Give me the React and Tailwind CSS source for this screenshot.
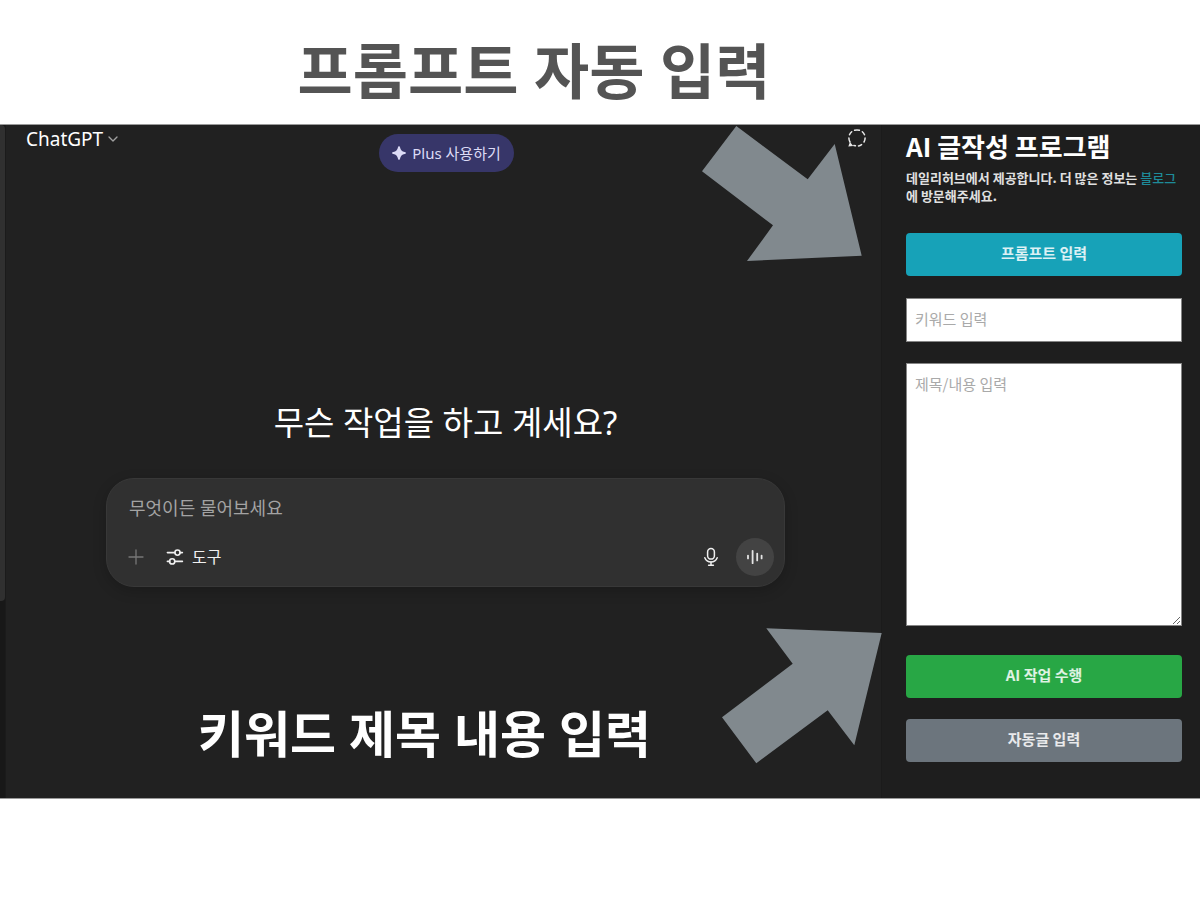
import { ChevronDown } from 'lucide-react';

const fontUi = "font-['Noto_Sans','Noto_Sans_CJK_KR',sans-serif]";
const fontKr = "font-['Noto_Sans_CJK_KR',sans-serif]";

function SparkleIcon() {
  return (
    <svg width="14" height="14" viewBox="0 0 14 14" fill="currentColor" aria-hidden="true">
      <path d="M7 0.2C7.6 0.2 7.9 0.7 8 1.3C8.5 4 10 5.5 12.7 6C13.3 6.1 13.8 6.4 13.8 7C13.8 7.6 13.3 7.9 12.7 8C10 8.5 8.5 10 8 12.7C7.9 13.3 7.6 13.8 7 13.8C6.4 13.8 6.1 13.3 6 12.7C5.5 10 4 8.5 1.3 8C0.7 7.9 0.2 7.6 0.2 7C0.2 6.4 0.7 6.1 1.3 6C4 5.5 5.5 4 6 1.3C6.1 0.7 6.4 0.2 7 0.2Z" />
    </svg>
  );
}

function TemporaryChatIcon() {
  return (
    <svg width="20" height="20" viewBox="0 0 20 20" fill="none" stroke="currentColor" strokeWidth="1.5" strokeLinecap="round" aria-hidden="true">
      <path d="M7.6 2.3A8.2 8.2 0 0 1 12.4 2.3" />
      <path d="M15.3 3.7A8.2 8.2 0 0 1 17.5 6.7" />
      <path d="M18.1 10A8.2 8.2 0 0 1 17 14" />
      <path d="M14.6 16.6A8.2 8.2 0 0 1 11.5 17.9" />
      <path d="M4.7 3.7A8.2 8.2 0 0 0 2.5 6.7" />
      <path d="M1.9 10A8.2 8.2 0 0 0 3 14" />
      <path d="M8.4 17.8L6.8 17.4" />
      <path d="M3.2 15.4L2.4 17.6L4.8 17.4Z" fill="currentColor" />
    </svg>
  );
}

function PlusIcon() {
  return (
    <svg width="16" height="16" viewBox="0 0 16 16" fill="none" stroke="currentColor" strokeWidth="1.3" strokeLinecap="round" aria-hidden="true">
      <path d="M8 1V15M1 8H15" />
    </svg>
  );
}

function ToolsIcon() {
  return (
    <svg width="18" height="18" viewBox="0 0 18 18" fill="none" stroke="currentColor" strokeWidth="1.6" strokeLinecap="round" aria-hidden="true">
      <circle cx="11.5" cy="4.6" r="2.6" />
      <circle cx="6.2" cy="13.4" r="2.6" />
      <path d="M1.4 4.6H8.9M14.1 4.6H16.4" />
      <path d="M1.4 13.4H3.6M8.8 13.4H16.4" />
    </svg>
  );
}

function MicIcon() {
  return (
    <svg width="16" height="20" viewBox="0 0 16 20" fill="none" stroke="currentColor" strokeWidth="1.5" strokeLinecap="round" aria-hidden="true">
      <rect x="4.6" y="1.5" width="6.8" height="10.6" rx="3.4" />
      <path d="M1.8 10.8C2.8 13.4 5.1 15 8 15C10.9 15 13.2 13.4 14.2 10.8" />
      <path d="M8 15V18M5.6 18.2H10.4" />
    </svg>
  );
}

function VoiceIcon() {
  return (
    <svg width="18" height="18" viewBox="0 0 18 18" fill="none" stroke="currentColor" strokeWidth="1.8" strokeLinecap="round" aria-hidden="true">
      <path d="M2 7.6V10.4M6.6 2.8V15.2M11.2 5.6V12.4M15.6 7.6V10.4" />
    </svg>
  );
}

function ChatPane() {
  return (
    <section className="relative flex min-w-0 flex-1 flex-col bg-[#212121] text-white">
      <header className="grid grid-cols-[1fr_auto_1fr] items-start pl-5 pr-[14px]">
        <button className="flex items-center gap-[2px] justify-self-start text-[19px] leading-7">
          ChatGPT
          <ChevronDown size={16} strokeWidth={2} className="text-[#a0a0a0]" />
        </button>
        <button className="mt-[9px] flex h-[38px] items-center gap-[6px] rounded-full bg-[#373669] px-[13px] text-[15px] text-[#dcdbf6]">
          <SparkleIcon />
          Plus 사용하기
        </button>
        <button aria-label="임시 채팅" className="mt-[3px] justify-self-end text-[#e8e8e8]">
          <TemporaryChatIcon />
        </button>
      </header>

      <main className="flex flex-col items-center pl-[100px] pr-24 pt-[226px]">
        <h2 className="text-[33px] leading-[50px]">무슨 작업을 하고 계세요?</h2>
        <form className="mt-[30px] w-full max-w-[680px] rounded-[28px] border border-[#383838] bg-[#303030] px-[10px] pb-[10px] pt-4 shadow-[0_4px_14px_rgba(0,0,0,0.2)]">
          <input
            aria-label="메시지"
            placeholder="무엇이든 물어보세요"
            className="block h-[26px] w-full bg-transparent px-3 text-[18px] outline-none placeholder:text-[#a3a3a3]"
          />
          <div className="mt-[17px] flex h-[38px] items-center">
            <button type="button" aria-label="추가" className="ml-[11px] text-[#777]">
              <PlusIcon />
            </button>
            <button type="button" className="ml-[22px] flex items-center gap-2 text-[16px] text-[#f0f0f0]">
              <ToolsIcon />
              도구
            </button>
            <button type="button" aria-label="음성 입력" className="ml-auto text-[#f0f0f0]">
              <MicIcon />
            </button>
            <button type="button" aria-label="음성 모드" className="ml-[17px] grid size-[38px] place-items-center rounded-full bg-[#434343] text-[#e4e4e4]">
              <VoiceIcon />
            </button>
          </div>
        </form>
      </main>

      <p className="mr-[38px] mt-[111px] text-center text-[50px] font-bold leading-[72px]">키워드 제목 내용 입력</p>

      {/* Arrows pointing at the side panel */}
      <svg className="absolute right-[19px] top-px" width="160" height="136" viewBox="702 126 160 136" fill="#81898e" aria-hidden="true">
        <path d="M736.3 126L807.7 179.3L834.7 144L861.7 255.7L747 261L773 225.3L702 171.3Z" />
      </svg>
      <svg className="absolute -right-px bottom-[34px] z-10" width="160" height="136" viewBox="722 628 160 136" fill="#81898e" aria-hidden="true">
        <path d="M766.3 628.3L881.7 633L854.3 745.3L827.7 710.3L756.3 763.3L722 717.3L792.7 663.7Z" />
      </svg>
    </section>
  );
}

function ActionButton({ className, children }) {
  return (
    <button type="button" className={`block h-[43px] w-full rounded pb-[2px] text-[15px] font-bold text-white/85 ${className}`}>
      {children}
    </button>
  );
}

function SidePanel() {
  return (
    <aside className={`w-[319px] shrink-0 border-l border-[#1b1b1b] bg-[#1e1e1e] pl-6 pr-[18px] pt-[2px] text-[#e0e0e0] ${fontKr}`}>
      <h2 className="text-[26px] font-bold leading-[38px] text-white">AI 글작성 프로그램</h2>
      <p className="mt-1 break-all text-[13px] font-bold leading-[18px]">
        데일리허브에서 제공합니다. 더 많은 정보는{' '}
        <a href="#blog" className="font-medium text-[#1e8b99]">블로그</a>에 방문해주세요.
      </p>
      <form>
        <ActionButton className="mt-7 bg-[#17a2b8]">프롬프트 입력</ActionButton>
        <input
          aria-label="키워드"
          placeholder="키워드 입력"
          className="mt-[22px] block h-11 w-full border border-[#858585] bg-white px-2 pb-1 text-[15px] text-black placeholder:text-[#a9a9a9]"
        />
        <textarea
          aria-label="제목/내용"
          placeholder="제목/내용 입력"
          className="mt-[21px] block h-[263px] w-full resize border border-[#858585] bg-white px-2 py-[9px] text-[15px] leading-[22px] text-black placeholder:text-[#a9a9a9]"
        />
        <ActionButton className="mt-[29px] bg-[#28a745]">AI 작업 수행</ActionButton>
        <ActionButton className="mt-[21px] bg-[#6c757d]">자동글 입력</ActionButton>
      </form>
    </aside>
  );
}

export default function App() {
  return (
    <div className={`min-h-screen bg-white ${fontUi}`}>
      <h1 className="mr-[132px] pb-[10px] pt-7 text-center text-[60px] font-bold leading-[86px] text-[#545454]">
        프롬프트 자동 입력
      </h1>
      <div className="flex min-h-[675px] border-y border-[#9a9a9a] bg-[#212121]">
        {/* Scroll track */}
        <div className="w-[6px] shrink-0 border-r border-[#1b1b1b] bg-[#181818]">
          <div className="h-[476px] rounded-r-sm bg-[#303030]" />
        </div>
        <ChatPane />
        <SidePanel />
      </div>
    </div>
  );
}
